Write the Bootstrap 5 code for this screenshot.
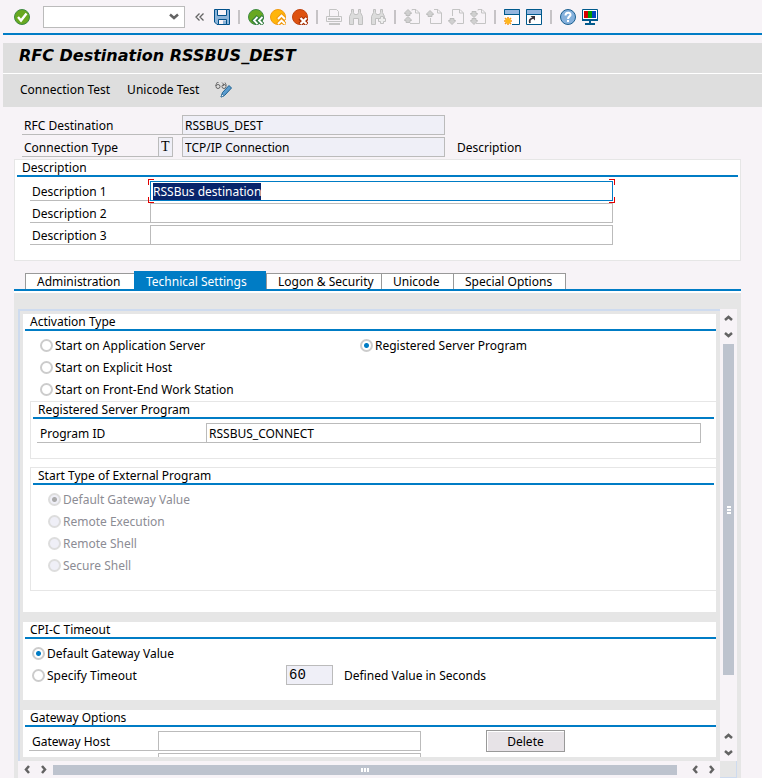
<!DOCTYPE html>
<html lang="en">
<head>
<meta charset="utf-8">
<meta name="viewport" content="width=device-width, initial-scale=1">
<title>RFC Destination RSSBUS_DEST</title>
<link href="https://cdn.jsdelivr.net/npm/bootstrap@5.3.0/dist/css/bootstrap.min.css" rel="stylesheet">
<style>
  :root { --sap-blue: #007cc5; --canvas: #f7f3f7; --grey: #e6e6e6; --line: #bbb; --band: #dedede; }
  body { font: 12px/15px "Noto Sans", sans-serif; color: #000; background: var(--canvas); }
  main { padding-left: 3px; }
  button, input, select { font: inherit; color: inherit; }

  .command-bar { height: 35px; border-bottom: 2px solid var(--sap-blue); padding-left: 11px; }
  .icon-btn { width: 16px; height: 16px; padding: 0; border: 0; background: none; display: block; flex: none; }
  .icon-btn svg { display: block; width: 16px; height: 16px; }
  .icon-group { gap: 6px; }
  .separator { width: 2px; height: 14px; background: #c6c3c6; margin: 0 2px; }
  .command-box { width: 142px; height: 22px; margin: 0 10px 0 13px; }
  .command-box select { appearance: none; border: 1px solid var(--line); border-radius: 0; background: #fff; width: 100%; height: 100%; }
  .command-box svg { position: absolute; right: 6px; top: 7px; pointer-events: none; }
  .collapse-btn { width: 9px; margin-right: 10px; }
  .title-band { background: var(--band); height: 31px; border-bottom: 1px solid #fff; padding-left: 16px; }
  .title-band h1 { font: italic 700 16px/26px "DejaVu Sans", sans-serif; margin: 0; }
  .action-band { background: var(--band); height: 33px; padding: 0 0 2px 17px; gap: 17px; }
  .action-band .text-btn { border: 0; background: none; padding: 0; }

  .field-row { min-height: 22px; display: flex; align-items: center; }
  .field-label { height: 20px; line-height: 21px; border-bottom: 1px solid var(--line); padding-left: 2px; flex: none; }
  .field-box { height: 20px; border: 1px solid var(--line); border-radius: 0; background: #fff; padding: 0 2px; min-width: 0; outline: 0; display: block; }
  .field-box[readonly] { background: #efeff7; }
  .header-form { padding: 7px 0 1px 19px; }
  .w-type { width: 136px; } .w-dest { width: 160px; } .w-name { width: 263px; }
  .type-box { width: 15px; font: 14px "Liberation Serif", serif; padding: 0 2px; margin-right: 9px; }

  .group { background: #fff; padding-left: 2px; }
  .group-title { font-size: 12px; line-height: 15px; font-weight: 400; margin: 0; padding-left: 5px; border-bottom: 2px solid var(--sap-blue); }
  .group-body { padding-top: 3px; }
  .description-group { border: 1px solid var(--grey); margin: 0 21px 10px 11px; padding-right: 2px; }
  .description-group .group-body { padding: 3px 125px 14px 13px; }
  .description-group .field-label { width: 120px; }
  .focus-frame { position: relative; }
  .focus-frame::before {
    content: ""; position: absolute; inset: -2px; pointer-events: none;
    --r: linear-gradient(#e00000, #e00000);
    background: var(--r) 0 0/6px 1px, var(--r) 0 0/1px 6px, var(--r) 100% 0/6px 1px, var(--r) 100% 0/1px 6px,
      var(--r) 0 100%/6px 1px, var(--r) 0 100%/1px 6px, var(--r) 100% 100%/6px 1px, var(--r) 100% 100%/1px 6px;
    background-repeat: no-repeat;
  }
  .focus-frame .field-box { border-color: var(--sap-blue); }
  .field-box::selection { background: #08246b; color: #fff; }

  .settings { margin: 0 21px 0 11px; min-height: 0; }
  .sap-tabs { display: grid; grid-template-columns: 109px 132px 115px 72px 113px; align-items: end; padding-left: 11px; border-bottom: 2px solid var(--sap-blue); }
  .sap-tabs .nav-link { height: 16px; line-height: 15px; padding: 0 0 0 11px; margin: 0; color: #000; background: #fff; border: 1px solid #999; border-width: 1px 0 0 1px; border-radius: 0; text-align: left; white-space: nowrap; }
  .sap-tabs .nav-link.active { height: 18px; line-height: 18px; padding-top: 1px; color: #fff; background: var(--sap-blue); border-color: var(--sap-blue); }
  .sap-tabs .nav-item:last-child .nav-link { border-right-width: 1px; }
  .tab-area { background: var(--grey); border-top: 2px solid #fff; padding: 16px 4px 0; min-height: 0; }
  .scroll-view { border: 2px solid #cedbef; border-width: 2px 0 0 2px; padding: 3px 4px 4px 3px; min-height: 0; min-width: 0; }
  .scroll-content { gap: 10px; min-height: 0; height: 0; overflow: hidden; }
  .scroll-content > .group { flex: none; }

  .radio-line { height: 22px; display: flex; align-items: center; gap: 2px; }
  .radio-line input { appearance: none; width: 13px; height: 13px; margin: 0; border: 2px solid #ccc; border-radius: 50%; background: #fff; flex: none; }
  .radio-line input:checked { background: radial-gradient(circle, var(--sap-blue) 0 2px, #fff 3px); }
  .radio-line input:disabled { background: #efeff7; border-color: #ddd; }
  .radio-line input:disabled:checked { background: radial-gradient(circle, #aaa 0 2px, #efeff7 3px); }
  .radio-line input:disabled + label { color: #8c8c94; }
  .activation-group { padding-bottom: 21px; }
  .activation { padding: 3px 0 1px 15px; }
  .activation .first { width: 320px; }
  .subgroup { border: 1px solid var(--grey); border-right: 0; margin-left: 5px; padding: 0 2px; }
  .program-body { padding: 3px 13px 14px 4px; }
  .program-body .field-label { width: 169px; padding-left: 3px; }
  .start-body { padding: 3px 0 14px 15px; }
  .timeout-body { padding: 3px 0 14px 7px; }
  .timeout-body .second { width: 254px; }
  .seconds-box { width: 47px; font: 14px "Liberation Mono", monospace; margin-right: 11px; }
  .gateway-body { padding: 3px 0 14px 4px; }
  .gateway-body .field-label { width: 129px; padding-left: 3px; }
  .btn-delete { width: 79px; height: 22px; padding: 0; margin-left: 65px; border: 1px solid #999; background: #e7e3e7; box-shadow: inset 1px 1px #fff; border-radius: 0; }

  .bar-v { width: 17px; background: var(--canvas); }
  .bar-h { height: 17px; background: var(--canvas); }
  .arrow { width: 17px; height: 17px; padding: 0; border: 0; background: none; flex: none; }
  .arrow svg, .command-box svg, .collapse-btn svg { display: block; margin: auto; fill: none; stroke: #636363; stroke-width: 2; }
  .command-box svg { margin: 0; }
  .arrow svg { stroke-width: 2.5; }
  .thumb { background: #bdc3ce; display: flex; align-items: center; justify-content: center; gap: 1px; }
  .thumb i { background: #fff; }
  .bar-v .thumb { width: 11px; margin: 1px 3px 0; flex-direction: column; }
  .bar-v .thumb i { width: 4px; height: 2px; }
  .bar-h .thumb { height: 10px; margin-left: 1px; }
  .bar-h .thumb i { width: 2px; height: 4px; }
  .corner { width: 17px; height: 17px; border: 1px solid #cedbef; border-width: 0 1px 1px 0; }
</style>
<script src="https://cdn.jsdelivr.net/npm/bootstrap@5.3.0/dist/js/bootstrap.bundle.min.js"></script>
</head>
<body>
<svg class="d-none" aria-hidden="true">
  <symbol id="page" viewBox="0 0 16 16"><path d="M8 .5h4l3.500 3.500v10.500H6M8 .5v1M11.500 .5V4h4" fill="none" stroke="#c4c4c4"/></symbol>
  <symbol id="up" viewBox="0 0 8 7"><path d="M4 .5 7.500 4v.5H6v2H2v-2H.5V4z" fill="#d0d0d0" stroke="#bdbdbd"/></symbol>
  <symbol id="down" viewBox="0 0 8 7"><path d="M4 6.500 7.500 3v-.5H6v-2H2v2H.5V3z" fill="#d0d0d0" stroke="#bdbdbd"/></symbol>
</svg>
<main class="d-flex flex-column vh-100 overflow-hidden">
  <div class="flex-shrink-0">
    <div class="command-bar d-flex align-items-center">
      <button class="icon-btn" type="button" aria-label="Enter"><svg viewBox="0 0 16 16"><circle cx="8" cy="8" r="7.500" fill="#68a820" stroke="#3f8a44"/><path d="M4 8l3 3.500 5.500-7" fill="none" stroke="#fff" stroke-width="2.400"/></svg></button>
      <div class="command-box position-relative">
        <select aria-label="Command"><option></option></select>
        <svg width="10" height="8" viewBox="0 0 10 8"><path d="M1 1.500 5 5l4-3.500" stroke-width="2.500"/></svg>
      </div>
      <button class="icon-btn collapse-btn" type="button" aria-label="Collapse"><svg class="w-100" viewBox="0 0 9 16"><path d="M4.500 4.500 1 8l3.500 3.500M8.500 4.500 5 8l3.500 3.500" stroke-width="1.300"/></svg></button>
      <div class="icon-group d-flex align-items-center">
        <button class="icon-btn" type="button" aria-label="Save"><svg viewBox="0 0 16 16"><path d="M.5.500h15v15H3L.5 13z" fill="#8cb4d8" stroke="#00508a"/><path d="M3.500.500h9v6h-9z" fill="#f7f3f7" stroke="#00508a"/><path d="M4.500 15.500v-5h8v5z" fill="#f7f3f7" stroke="#00508a"/><path d="M9 11.500h3V15H9z" fill="#8cb4d8"/></svg></button>
        <span class="separator"></span>
        <button class="icon-btn" type="button" aria-label="Back"><svg viewBox="0 0 16 16"><circle cx="8" cy="8" r="7.500" fill="#68a820" stroke="#3f8a44"/><path d="M10 7.500 6 11.500l4 4M15 7.500l-4 4 4 4" fill="none" stroke="#2f7a3c" stroke-width="4"/><path d="M9.500 8 6 11.500 9.500 15M14.500 8 11 11.500l3.500 3.500" fill="none" stroke="#fff" stroke-width="1.800"/></svg></button>
        <button class="icon-btn" type="button" aria-label="Exit"><svg viewBox="0 0 16 16"><circle cx="8" cy="8" r="7.500" fill="#ffb50a" stroke="#f09a10"/><path d="M7.500 10.500l4-4 4 4M7.500 15.500l4-4 4 4" fill="none" stroke="#f09a10" stroke-width="4"/><path d="M8 10l3.500-3.500L15 10M8 15l3.500-3.500L15 15" fill="none" stroke="#fff" stroke-width="1.800"/></svg></button>
        <button class="icon-btn" type="button" aria-label="Cancel"><svg viewBox="0 0 16 16"><circle cx="8" cy="8" r="7.500" fill="#de5210" stroke="#c04410"/><path d="M8 9l7 6.500M15 9l-7 6.500" stroke="#a52c00" stroke-width="4.500"/><path d="M8.500 9l6 6M14.500 9l-6 6" stroke="#fff" stroke-width="2.300"/></svg></button>
        <span class="separator"></span>
        <button class="icon-btn" type="button" aria-label="Print"><svg viewBox="0 0 16 16"><path d="M3.500 7V.5h7l2 2V7M.5 7.500h15v5H.5z" fill="none" stroke="#c4c4c4"/><path d="M2 9h12v2H2zM3 14h11v2H3z" fill="#c4c4c4"/></svg></button>
        <button class="icon-btn" type="button" aria-label="Find"><svg viewBox="0 0 16 16"><path d="M3.500.500h2v3l1 2h3l1-2v-3h2v3l2 4v8h-4v-6h-5v6h-4v-8l2-4z" fill="#dcdcdc" stroke="#c0c0c0"/></svg></button>
        <button class="icon-btn" type="button" aria-label="Find next"><svg viewBox="0 0 16 16"><path d="M3.500.500h2v3l1 2h3l1-2v-3h2v3l2 4v3h-4v-1h-5v6h-4v-8l2-4z" fill="#dcdcdc" stroke="#c0c0c0"/><path d="M10.500 7.500h3v2h2v3h-2v2h-3v-2h-2v-3h2z" fill="#eee" stroke="#c0c0c0"/></svg></button>
        <span class="separator"></span>
        <button class="icon-btn" type="button" aria-label="First page"><svg viewBox="0 0 16 16"><use href="#page"/><use href="#up" width="8" height="7"/><use href="#up" y="7" width="8" height="7"/></svg></button>
        <button class="icon-btn" type="button" aria-label="Previous page"><svg viewBox="0 0 16 16"><path d="M8 .5h4L15.500 4v10.500H4.500V9M11.500.500V4h4" fill="none" stroke="#c4c4c4"/><use href="#up" y="1" width="8" height="7"/></svg></button>
        <button class="icon-btn" type="button" aria-label="Next page"><svg viewBox="0 0 16 16"><path d="M4.500 7V.5H12L15.500 4v10.500H9M11.500.500V4h4" fill="none" stroke="#c4c4c4"/><use href="#down" y="9" width="8" height="7"/></svg></button>
        <button class="icon-btn" type="button" aria-label="Last page"><svg viewBox="0 0 16 16"><use href="#page"/><use href="#down" y="2" width="8" height="7"/><use href="#down" y="9" width="8" height="7"/></svg></button>
        <span class="separator"></span>
        <button class="icon-btn" type="button" aria-label="New session"><svg viewBox="0 0 16 16"><path d="M.5.500h15v15H.5z" fill="#fff"/><path d="M0 0h16v5H0z" fill="#94b5de"/><path d="M8 15.500h7.500V.5H.5V6M0 5.500h16" fill="none" stroke="#00598c"/><path d="M4 8v8M0 12h8M1 9l6 6M7 9l-6 6" stroke="#f7941d" stroke-width="1.500"/><circle cx="4" cy="12" r="2.700" fill="#ffb81c"/></svg></button>
        <button class="icon-btn" type="button" aria-label="Create shortcut"><svg viewBox="0 0 16 16"><path d="M.5.500h15v15H.5z" fill="#fff"/><path d="M0 0h16v5H0z" fill="#94b5de"/><path d="M.5.500h15v15H.5zM0 5.500h16" fill="none" stroke="#00598c"/><path d="M4 14c-1-3 0-4 3-5" fill="none" stroke="#39313a" stroke-width="1.800"/><path d="M4.500 7H9v4.500z" fill="#39313a"/></svg></button>
        <span class="separator"></span>
        <button class="icon-btn" type="button" aria-label="Help"><svg viewBox="0 0 16 16"><circle cx="8" cy="8" r="7.500" fill="#84b0dc" stroke="#1c6090"/><path d="M5.500 6.500C5.500 3 11 3 10.500 6 10.300 7.500 8 7.500 8 10M8 11v2" fill="none" stroke="#fff" stroke-width="2"/></svg></button>
        <button class="icon-btn" type="button" aria-label="Customize layout"><svg viewBox="0 0 16 16"><path d="M.5.500h15v10H.5z" fill="#fff" stroke="#00598c"/><path d="M2 2h4v7H2z" fill="#d60000"/><path d="M6 2h4v7H6z" fill="#009c00"/><path d="M10 2h4v7h-4z" fill="#0046c0"/><path d="M0 10h16v2H0zM7 12h2v2H7zM3 14h10v2H3z" fill="#00598c"/></svg></button>
      </div>
    </div>
    <header class="title-band mt-2"><h1>RFC Destination RSSBUS_DEST</h1></header>
    <div class="action-band d-flex align-items-center">
      <button class="text-btn" type="button">Connection Test</button>
      <button class="text-btn" type="button">Unicode Test</button>
      <button class="icon-btn" type="button" aria-label="Display or change"><svg viewBox="0 0 16 16" overflow="visible"><path d="M-.5 4 1 .5h1.500M6 .5l1.500 1.500v2M10.500 3.500 9 .5" fill="none" stroke="#777"/><circle cx="2" cy="4.500" r="2" fill="none" stroke="#666"/><circle cx="8" cy="4.500" r="2" fill="none" stroke="#666"/><path d="M5 15l1.500-4.500L13 3.500l2.500 2.500-7 7.500z" fill="#5a9ccf" stroke="#1c6090"/><path d="M5 15l1-3 2 1.800z" fill="#fff" stroke="#1c6090" stroke-width=".6"/></svg></button>
    </div>
  </div>

  <section class="header-form flex-shrink-0">
    <div class="field-row">
      <label class="field-label w-dest" for="dest">RFC Destination</label>
      <input class="field-box w-name" id="dest" value="RSSBUS_DEST" readonly>
    </div>
    <div class="field-row">
      <label class="field-label w-type" for="ctype">Connection Type</label>
      <input class="field-box type-box" id="ctype" value="T" readonly>
      <input class="field-box w-name" aria-label="Connection type name" value="TCP/IP Connection" readonly>
      <span class="ms-2 ps-1">Description</span>
    </div>
  </section>

  <section class="group description-group flex-shrink-0">
    <h2 class="group-title">Description</h2>
    <div class="group-body">
      <div class="field-row">
        <label class="field-label" for="desc1">Description 1</label>
        <div class="focus-frame flex-fill"><input class="field-box w-100" id="desc1" value="RSSBus destination"></div>
      </div>
      <div class="field-row">
        <label class="field-label" for="desc2">Description 2</label>
        <input class="field-box flex-fill" id="desc2">
      </div>
      <div class="field-row">
        <label class="field-label" for="desc3">Description 3</label>
        <input class="field-box flex-fill" id="desc3">
      </div>
    </div>
  </section>

  <section class="settings d-flex flex-column flex-fill">
    <ul class="nav nav-tabs sap-tabs" role="tablist">
      <li class="nav-item"><button class="nav-link w-100" type="button" role="tab">Administration</button></li>
      <li class="nav-item"><button class="nav-link w-100 active" type="button" role="tab" aria-selected="true">Technical Settings</button></li>
      <li class="nav-item"><button class="nav-link w-100" type="button" role="tab">Logon &amp; Security</button></li>
      <li class="nav-item"><button class="nav-link w-100" type="button" role="tab">Unicode</button></li>
      <li class="nav-item"><button class="nav-link w-100" type="button" role="tab">Special Options</button></li>
    </ul>
    <div class="tab-area d-flex flex-column flex-fill">
      <div class="d-flex flex-fill">
        <div class="scroll-view d-flex flex-column flex-fill">
          <div class="scroll-content d-flex flex-column flex-fill">
            <section class="group activation-group">
              <h2 class="group-title">Activation Type</h2>
              <div class="activation">
                <div class="d-flex">
                  <div class="radio-line first"><input type="radio" name="activation" id="a1"><label for="a1">Start on Application Server</label></div>
                  <div class="radio-line"><input type="radio" name="activation" id="a2" checked><label for="a2">Registered Server Program</label></div>
                </div>
                <div class="radio-line"><input type="radio" name="activation" id="a3"><label for="a3">Start on Explicit Host</label></div>
                <div class="radio-line"><input type="radio" name="activation" id="a4"><label for="a4">Start on Front-End Work Station</label></div>
              </div>
              <section class="subgroup mb-2">
                <h3 class="group-title">Registered Server Program</h3>
                <div class="program-body">
                  <div class="field-row">
                    <label class="field-label" for="program">Program ID</label>
                    <input class="field-box flex-fill" id="program" value="RSSBUS_CONNECT">
                  </div>
                </div>
              </section>
              <section class="subgroup">
                <h3 class="group-title">Start Type of External Program</h3>
                <div class="start-body">
                  <div class="radio-line"><input type="radio" name="start" id="s1" checked disabled><label for="s1">Default Gateway Value</label></div>
                  <div class="radio-line"><input type="radio" name="start" id="s2" disabled><label for="s2">Remote Execution</label></div>
                  <div class="radio-line"><input type="radio" name="start" id="s3" disabled><label for="s3">Remote Shell</label></div>
                  <div class="radio-line"><input type="radio" name="start" id="s4" disabled><label for="s4">Secure Shell</label></div>
                </div>
              </section>
            </section>
            <section class="group">
              <h2 class="group-title">CPI-C Timeout</h2>
              <div class="timeout-body">
                <div class="radio-line"><input type="radio" name="timeout" id="t1" checked><label for="t1">Default Gateway Value</label></div>
                <div class="field-row">
                  <div class="radio-line second"><input type="radio" name="timeout" id="t2"><label for="t2">Specify Timeout</label></div>
                  <input class="field-box seconds-box" id="seconds" value="60" readonly>
                  <label for="seconds">Defined Value in Seconds</label>
                </div>
              </div>
            </section>
            <section class="group">
              <h2 class="group-title">Gateway Options</h2>
              <div class="gateway-body">
                <div class="field-row">
                  <label class="field-label" for="gwhost">Gateway Host</label>
                  <input class="field-box w-name" id="gwhost">
                  <button class="btn-delete" type="button">Delete</button>
                </div>
                <div class="field-row">
                  <span class="field-label"></span>
                  <input class="field-box w-name" aria-label="Gateway service">
                </div>
              </div>
            </section>
          </div>
        </div>
        <div class="bar-v d-flex flex-column flex-shrink-0">
          <button class="arrow" type="button" aria-label="Page up"><svg width="9" height="6"><path d="M1 5l3.500-3L8 5"/></svg></button>
          <button class="arrow" type="button" aria-label="Scroll down"><svg width="9" height="6"><path d="M1 1l3.500 3L8 1"/></svg></button>
          <div class="flex-fill"><div class="thumb" style="height:86.200%"><i></i><i></i><i></i></div></div>
          <button class="arrow" type="button" aria-label="Scroll up"><svg width="9" height="6"><path d="M1 5l3.500-3L8 5"/></svg></button>
          <button class="arrow" type="button" aria-label="Page down"><svg width="9" height="6"><path d="M1 1l3.500 3L8 1"/></svg></button>
        </div>
      </div>
      <div class="d-flex flex-shrink-0">
        <div class="bar-h d-flex align-items-center flex-fill">
          <button class="arrow" type="button" aria-label="Page left"><svg width="6" height="9"><path d="M5 1 2 4.500 5 8"/></svg></button>
          <button class="arrow" type="button" aria-label="Scroll right"><svg width="6" height="9"><path d="M1 1l3 3.500L1 8"/></svg></button>
          <div class="flex-fill"><div class="thumb" style="width:98.500%"><i></i><i></i><i></i></div></div>
          <button class="arrow" type="button" aria-label="Scroll left"><svg width="6" height="9"><path d="M5 1 2 4.500 5 8"/></svg></button>
          <button class="arrow" type="button" aria-label="Page right"><svg width="6" height="9"><path d="M1 1l3 3.500L1 8"/></svg></button>
        </div>
        <div class="corner"></div>
      </div>
    </div>
  </section>
</main>
<script>
  const first = document.getElementById('desc1');
  first.focus();
  first.select();
</script>
</body>
</html>
